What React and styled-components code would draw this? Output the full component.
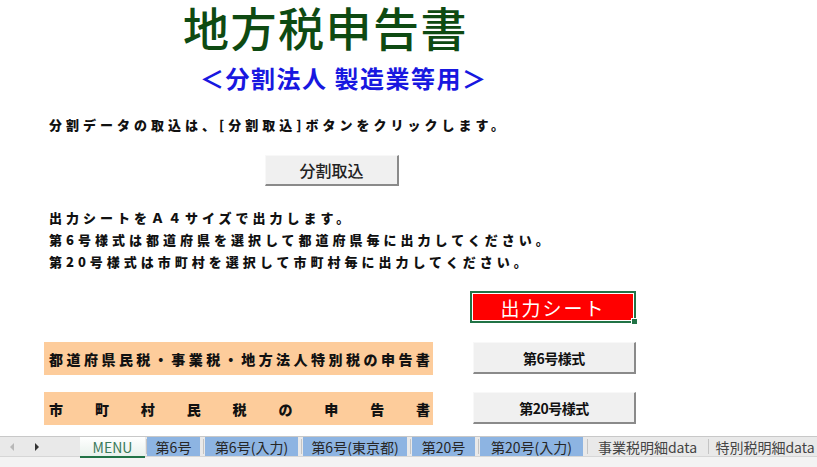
import React from 'react';
import styled, { createGlobalStyle } from 'styled-components';

const GlobalStyle = createGlobalStyle`
  html, body {
    margin: 0;
    padding: 0;
    background: #ffffff;
  }
  body {
    font-family: "Noto Sans CJK JP", "Noto Sans", sans-serif;
  }
`;

const JP = '"Noto Sans CJK JP", "Noto Sans", sans-serif';

// sheet tabs: width and space after each, as Excel draws them
const tabs = [
  { label: 'MENU', kind: 'active', width: 65, after: 2 },
  { label: '第6号', kind: 'blue', width: 53, after: 5 },
  { label: '第6号(入力)', kind: 'blue', width: 93, after: 5 },
  { label: '第6号(東京都)', kind: 'blue', width: 104, after: 5 },
  { label: '第20号', kind: 'blue', width: 63, after: 5 },
  { label: '第20号(入力)', kind: 'blue', width: 103, after: 7 },
  { label: '事業税明細data', kind: 'plain', width: 115, after: 5 },
  { label: '特別税明細data', kind: 'plain', width: 110, after: 0 },
];

const forms = [
  { band: '都道府県民税・事業税・地方法人特別税の申告書', button: '第6号様式' },
  { band: '市町村民税の申告書', button: '第20号様式' },
];

const App = () => {
  return (
    <>
      <GlobalStyle />
      <Page>
        <Sheet>
          <Title>地方税申告書</Title>
          <Subtitle>＜分割法人 製造業等用＞</Subtitle>
          <Instruction>分割データの取込は、[分割取込]ボタンをクリックします。</Instruction>
          <ImportButton>分割取込</ImportButton>
          <Notes>
            <NoteLine>出力シートをＡ４サイズで出力します。</NoteLine>
            <NoteLine>第6号様式は都道府県を選択して都道府県毎に出力してください。</NoteLine>
            <NoteLine>第20号様式は市町村を選択して市町村毎に出力してください。</NoteLine>
          </Notes>
          <OutputCell>
            <OutputLabel>出力シート</OutputLabel>
            <Handle />
          </OutputCell>
          {forms.map((f, i) => (
            <FormRow key={f.button} first={i === 0}>
              <Band>
                {Array.from(f.band).map((ch, j) => (
                  <span key={j}>{ch}</span>
                ))}
              </Band>
              <FormButton>{f.button}</FormButton>
            </FormRow>
          ))}
        </Sheet>
        <TabBar>
          <TabRow>
            <Nav>
              <Arrow dir="left" />
              <Arrow dir="right" />
            </Nav>
            {tabs.map((t) => (
              <Tab key={t.label} kind={t.kind} w={t.width} after={t.after}>
                {t.label}
              </Tab>
            ))}
          </TabRow>
          <TabFoot />
        </TabBar>
      </Page>
    </>
  );
};

const Page = styled.div`
  width: 817px;
  height: 467px;
  display: flex;
  flex-direction: column;
  overflow: hidden;
  background: #ffffff;
`;

const Sheet = styled.div`
  flex: 1;
  display: flex;
  flex-direction: column;
  align-items: flex-start;
`;

const Title = styled.div`
  margin: 0 0 0 183px;
  font-family: ${JP};
  font-size: 46px;
  line-height: 52px;
  font-weight: 500;
  color: #0e4a12;
  letter-spacing: 1.5px;
`;

const Subtitle = styled.div`
  margin: 12px 0 0 200px;
  font-family: ${JP};
  font-size: 24px;
  line-height: 28px;
  font-weight: 700;
  color: #1818e0;
  letter-spacing: 1.5px;
  white-space: pre;
`;

const Instruction = styled.div`
  margin: 23px 0 0 49px;
  font-family: ${JP};
  font-size: 13px;
  line-height: 20px;
  font-weight: 900;
  color: #111;
  letter-spacing: 4px;
  white-space: nowrap;
`;

const ImportButton = styled.div`
  margin: 20px 0 0 265px;
  width: 134px;
  height: 31px;
  box-sizing: border-box;
  display: flex;
  align-items: center;
  justify-content: center;
  background: #f0f0f0;
  border-top: 1px solid #f8f8f8;
  border-left: 1px solid #f8f8f8;
  border-right: 2px solid #8a8a8a;
  border-bottom: 2px solid #8a8a8a;
  font-family: ${JP};
  font-size: 16px;
  font-weight: 500;
  color: #222;
`;

const Notes = styled.div`
  margin: 21px 0 0 49px;
  display: flex;
  flex-direction: column;
`;

const NoteLine = styled.div`
  font-family: ${JP};
  font-size: 13px;
  line-height: 22px;
  font-weight: 900;
  color: #111;
  letter-spacing: 4px;
  white-space: nowrap;
`;

const OutputCell = styled.div`
  position: relative;
  margin: 18px 0 0 470px;
  width: 166px;
  height: 32px;
  box-sizing: border-box;
  border: 2px solid #217346;
  outline: 1px solid #ffffff;
  outline-offset: -3px;
  background: #ff0000;
  display: flex;
  align-items: center;
  justify-content: center;
`;

const OutputLabel = styled.span`
  font-family: ${JP};
  font-size: 19px;
  font-weight: 400;
  color: #ffffff;
  letter-spacing: 2px;
`;

const Handle = styled.span`
  position: absolute;
  right: -4px;
  bottom: -4px;
  width: 5px;
  height: 5px;
  background: #217346;
  border: 1px solid #ffffff;
`;

const FormRow = styled.div`
  margin: ${(p) => (p.first ? '19px' : '17px')} 0 0 44px;
  display: flex;
  align-items: flex-start;
  gap: 40px;
`;

const Band = styled.div`
  width: 389px;
  height: 33px;
  box-sizing: border-box;
  padding: 0 3px 0 5px;
  background: #fdcc9b;
  display: flex;
  align-items: center;
  justify-content: space-between;
  font-family: ${JP};
  font-size: 14px;
  font-weight: 900;
  color: #111;
`;

const FormButton = styled.div`
  width: 163px;
  height: 32px;
  box-sizing: border-box;
  display: flex;
  align-items: center;
  justify-content: center;
  background: #f0f0f0;
  border-top: 1px solid #f8f8f8;
  border-left: 1px solid #f8f8f8;
  border-right: 2px solid #8a8a8a;
  border-bottom: 2px solid #8a8a8a;
  font-family: ${JP};
  font-size: 14px;
  font-weight: 700;
  color: #111;
  letter-spacing: -0.5px;
`;

const TabBar = styled.div`
  height: 31px;
  flex-shrink: 0;
  display: flex;
  flex-direction: column;
  border-top: 1px solid #c8c8c8;
  box-sizing: border-box;
  background: #e9e9e9;
`;

const TabRow = styled.div`
  height: 19px;
  display: flex;
  align-items: stretch;
`;

const Nav = styled.div`
  width: 80px;
  flex-shrink: 0;
  display: flex;
  align-items: center;
  gap: 21px;
  padding-left: 10px;
  box-sizing: border-box;
`;

const Arrow = styled.span`
  width: 0;
  height: 0;
  border-top: 4px solid transparent;
  border-bottom: 4px solid transparent;
  ${(p) =>
    p.dir === 'left'
      ? 'border-right: 4px solid #b8b8b8;'
      : 'border-left: 4px solid #333333;'}
`;

const Tab = styled.div`
  width: ${(p) => p.w}px;
  flex-shrink: 0;
  box-sizing: border-box;
  display: flex;
  align-items: center;
  justify-content: center;
  margin-right: ${(p) => p.after}px;
  position: relative;
  font-family: ${JP};
  font-size: 14px;
  white-space: nowrap;
  color: ${(p) => (p.kind === 'active' ? '#3b7a5a' : p.kind === 'blue' ? '#262626' : '#444444')};
  background: ${(p) =>
    p.kind === 'active'
      ? 'linear-gradient(#ffffff, #e8f1ec)'
      : p.kind === 'blue'
      ? '#8db4e2'
      : 'transparent'};
  border-bottom: ${(p) => (p.kind === 'active' ? '2px solid #217346' : '0')};
  margin-bottom: ${(p) => (p.kind === 'active' ? '-2px' : '0')};
  &::after {
    content: '';
    position: absolute;
    right: ${(p) => -Math.ceil(p.after / 2) - 1}px;
    top: 2px;
    bottom: 2px;
    width: 1px;
    background: #c4c4c4;
  }
`;

const TabFoot = styled.div`
  flex: 1;
  background: #f3f3f3;
  border-top: 1px solid #d6d6d6;
`;

export default App;
